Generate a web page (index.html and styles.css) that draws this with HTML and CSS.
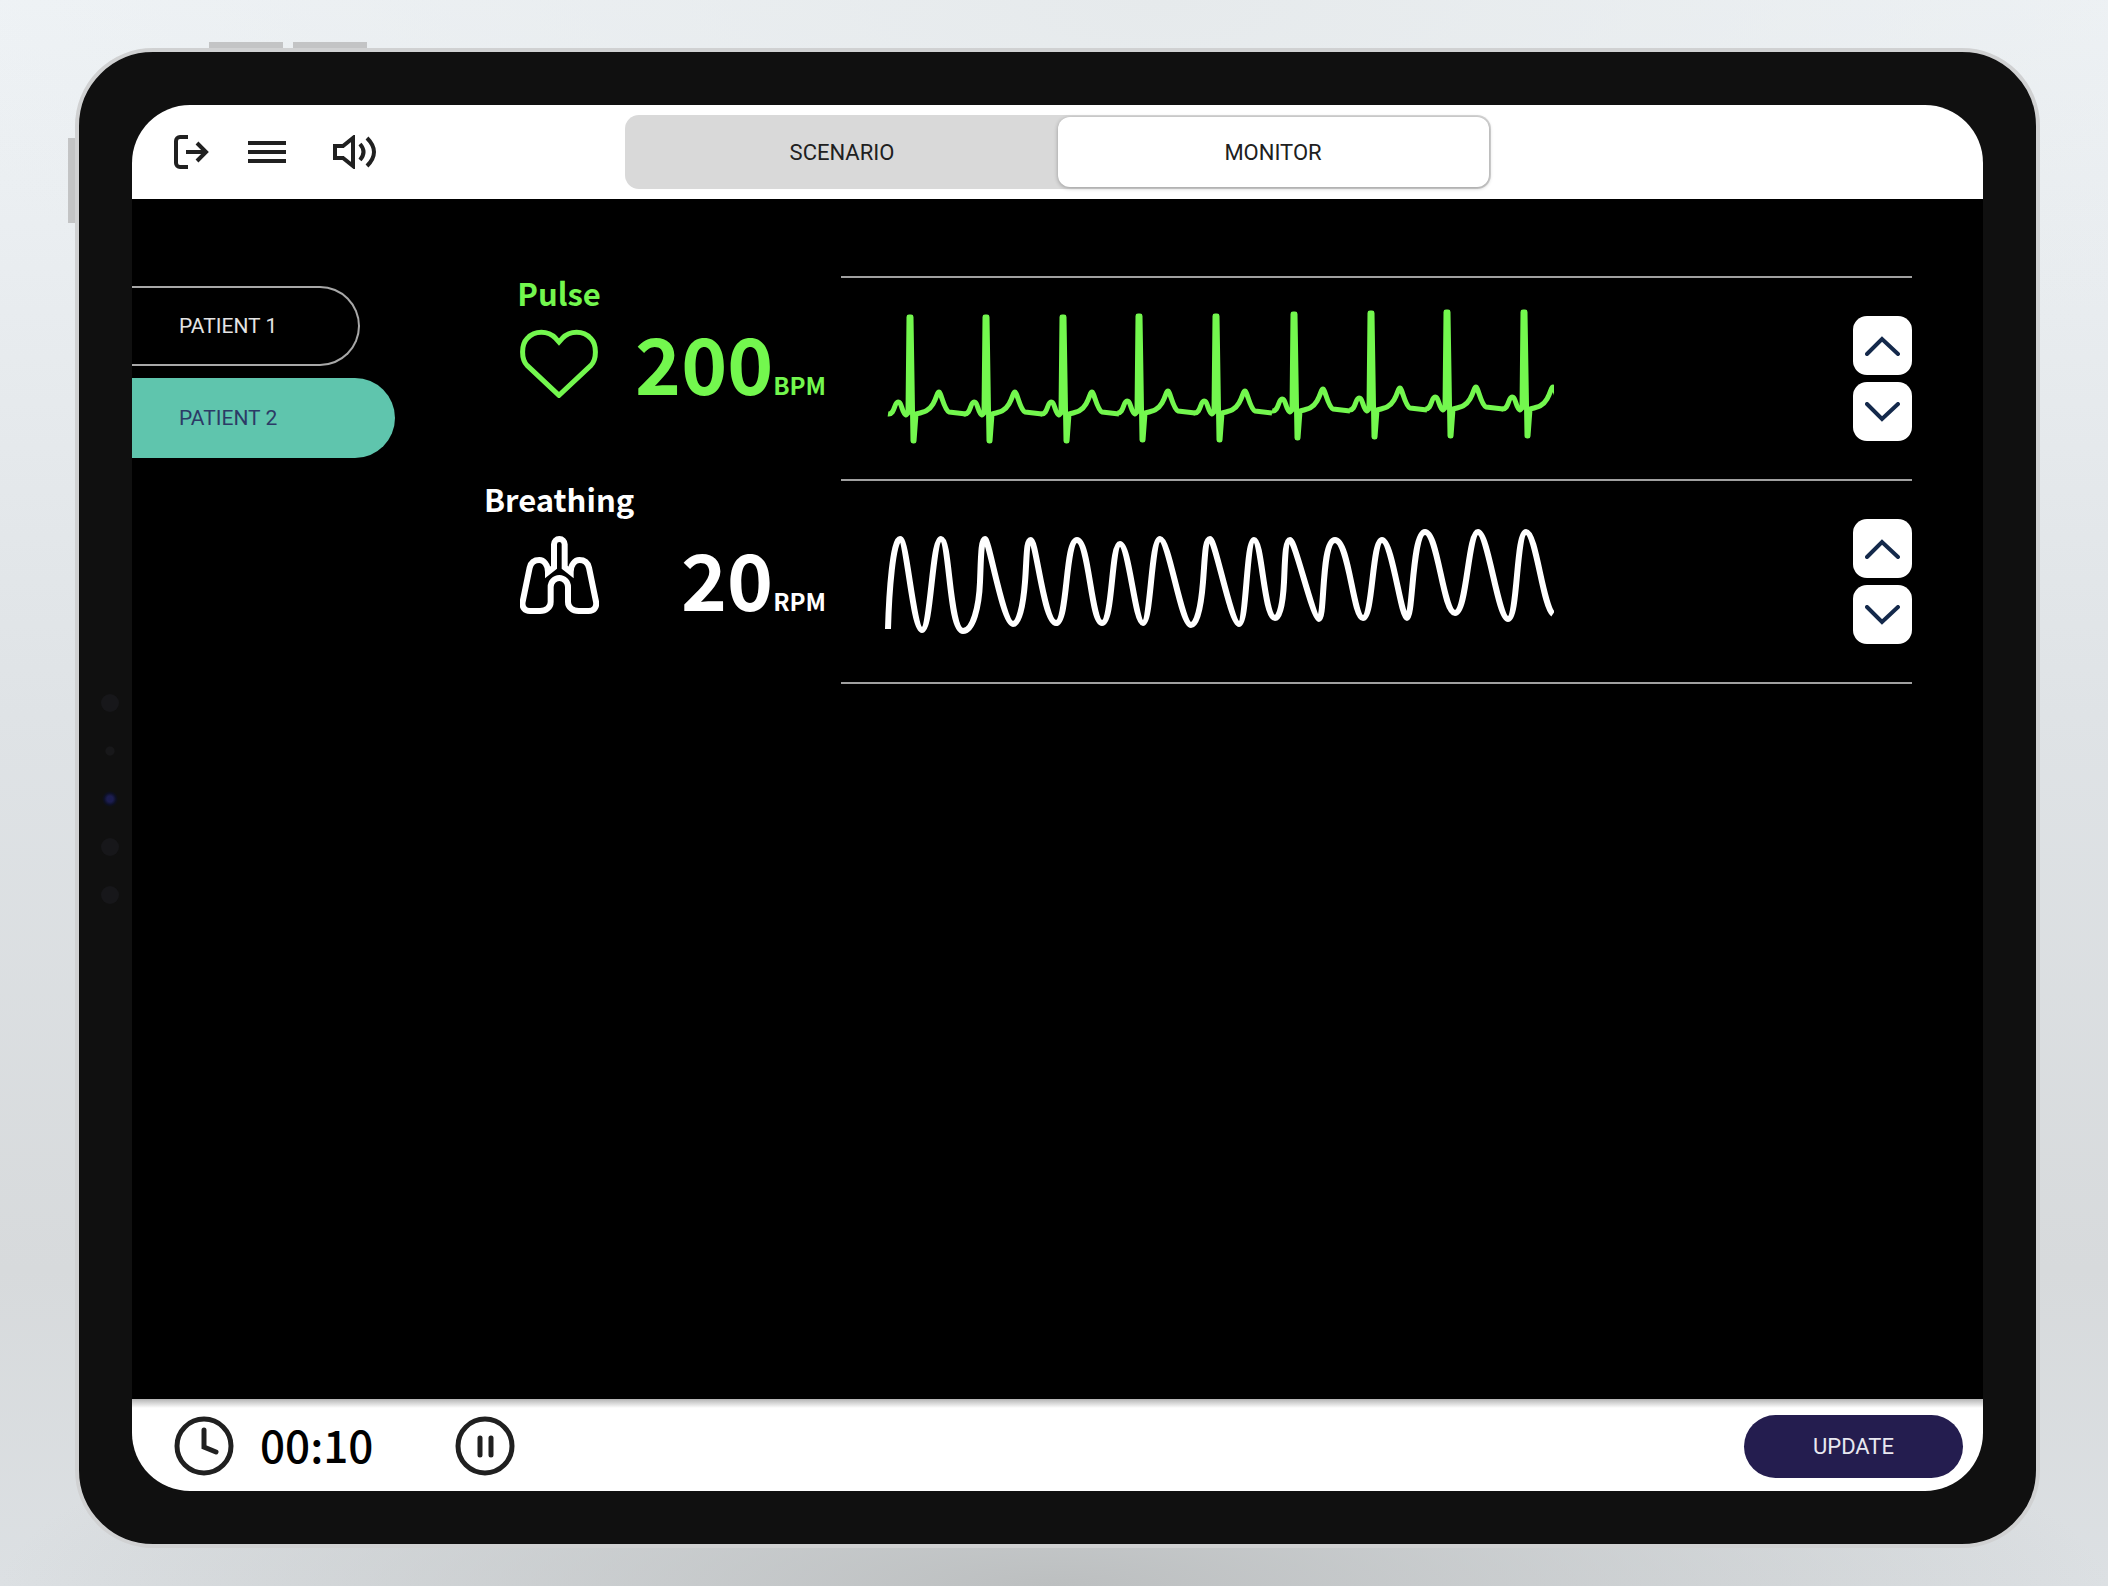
FILE: index.html
```html
<!DOCTYPE html>
<html lang="en">
<head>
  <meta charset="UTF-8" />
  <meta name="viewport" content="width=device-width, initial-scale=1.0"/>
  <title>Patient Monitor</title>
  <link rel="stylesheet" href="styles.css">
</head>
<body>

  <div class="tablet">
    <span class="side-btn side-btn-top"></span>
    <span class="side-btn side-btn-top second"></span>
    <span class="side-btn side-btn-left"></span>

    <div class="sensors">
      <span class="sensor"></span>
      <span class="sensor small"></span>
      <span class="sensor camera"></span>
      <span class="sensor"></span>
      <span class="sensor"></span>
    </div>

    <div class="screen">
      <header class="topbar">
        <div class="tools">
          <button class="icon-btn" aria-label="Log out">
            <svg width="36" height="34" viewBox="0 0 36 34"><path d="M14 2H6a4 4 0 0 0-4 4v22a4 4 0 0 0 4 4h8M12 17h20M23 8l9 9-9 9"/></svg>
          </button>
          <button class="icon-btn" aria-label="Menu">
            <svg width="38" height="34" viewBox="0 0 38 34"><path d="M0 8h38M0 17h38M0 26h38"/></svg>
          </button>
          <button class="icon-btn sound" aria-label="Sound">
            <svg width="44" height="34" viewBox="0 0 44 34"><path d="M2 11h8l10-8v28l-10-8H2zM27 9q7 8 0 16M34 3q14 14 0 28"/></svg>
          </button>
        </div>
        <nav class="tabs">
          <button class="tab">SCENARIO</button>
          <button class="tab active">MONITOR</button>
        </nav>
      </header>

      <main class="monitor">
        <div class="patients">
          <button class="patient">PATIENT 1</button>
          <button class="patient selected">PATIENT 2</button>
        </div>

        <div class="vitals">
          <section class="vital pulse">
            <div class="reading">
              <h2 class="label">Pulse</h2>
              <svg class="organ" width="78" height="74" viewBox="0 0 234 222"><path stroke-width="15" d="M117 214 22 125C3 106 3 62 22 43 44 19 84 19 107 43l10 11 10-11c23-24 63-24 85 0 19 19 19 63 0 82Z"/></svg>
              <div class="value">200<span class="unit">BPM</span></div>
            </div>
            <div class="track">
              <svg class="wave" width="673" height="200" viewBox="0 0 673 200">
                <defs>
                  <path id="beat" d="M-22 135C-15 136-16 123-12 123S-8 135-4 136L-2 134-1 38H1L3 162H4L6 135C14 133 19 132 23 125S27 113 29 113 34 131 39 133L56 135"/>
                </defs>
                <use href="#beat" x="29" y="0"/>
                <use href="#beat" x="105" y="0"/>
                <use href="#beat" x="182" y="0"/>
                <use href="#beat" x="258" y="-1"/>
                <use href="#beat" x="335" y="-1"/>
                <use href="#beat" x="413" y="-3"/>
                <use href="#beat" x="490" y="-4"/>
                <use href="#beat" x="566" y="-5"/>
                <use href="#beat" x="643" y="-5"/>
              </svg>
              <div class="stepper">
                <button class="step" aria-label="Increase pulse"><svg width="35" height="20" viewBox="0 0 35 20"><path d="M2 18 17 3 33 18"/></svg></button>
                <button class="step" aria-label="Decrease pulse"><svg width="35" height="20" viewBox="0 0 35 20"><path d="M2 2 17 17 33 2"/></svg></button>
              </div>
            </div>
          </section>

          <section class="vital breathing">
            <div class="reading">
              <h2 class="label">Breathing</h2>
              <svg class="organ" width="79" height="84" viewBox="0 0 237 252"><path stroke-width="18" d="M102 112V43a16 16 0 0 1 32 0v69l18 14C152 104 165 90 178 90s25 7 29 23l21 102c3 16-6 28-22 28h-30c-18 0-32-11-32-27v-45c0-15-12-27-26-27s-26 12-26 27v45c0 16-14 27-32 27H30C14 243 5 231 8 215L29 113C33 97 45 90 58 90s26 14 26 36Z"/></svg>
              <div class="value">20<span class="unit">RPM</span></div>
            </div>
            <div class="track">
              <svg class="wave" width="673" height="200" viewBox="0 0 673 200">
                <path d="M7 147C8 110 12 57 19 57S32 148 41 148 51 57 60 57 68 149 82 149C92 149 98 125 99 100S100 57 104 57 122 142 132 142C138 142 142 125 144 100S145 58 150 58 163 141 175 141 184 58 196 58 210 141 221 141 230 62 239 62 254 141 262 141 270 57 279 57 300 143 310 143C316 143 320 125 322 100S324 57 329 57 350 142 358 142 365 58 373 58 383 136 394 136C399 136 402 120 403 100S404 58 409 58 432 137 438 137 440 58 454 58 472 136 482 136 491 58 501 58 520 136 526 136 531 50 544 50 562 131 574 131 587 50 597 50 617 137 627 137 635 50 645 50 662 125 672 132"/>
              </svg>
              <div class="stepper">
                <button class="step" aria-label="Increase breathing"><svg width="35" height="20" viewBox="0 0 35 20"><path d="M2 18 17 3 33 18"/></svg></button>
                <button class="step" aria-label="Decrease breathing"><svg width="35" height="20" viewBox="0 0 35 20"><path d="M2 2 17 17 33 2"/></svg></button>
              </div>
            </div>
          </section>
        </div>
      </main>

      <footer class="bottombar">
        <svg class="round-icon" width="60" height="60" viewBox="0 0 60 60"><circle cx="30" cy="30" r="27"/><path d="M30 14v17l12 5"/></svg>
        <time class="clock">00:10</time>
        <button class="icon-btn pause" aria-label="Pause">
          <svg class="round-icon" width="60" height="60" viewBox="0 0 60 60"><circle cx="30" cy="30" r="27"/><path d="M25 22v17M36 22v17"/></svg>
        </button>
        <button class="update">UPDATE</button>
      </footer>
    </div>
  </div>

</body>
</html>
```
FILE: styles.css
```css
* {
  box-sizing: border-box;
}

body {
  margin: 0;
  min-height: 100vh;
  padding: 48px 68px 38px 75px;
  display: flex;
  font-family: Roboto, "Liberation Sans", sans-serif;
  font-size: 22px;
  background:
    radial-gradient(ellipse 50% 14% at 50% 100%, #bcbfc0, transparent),
    radial-gradient(ellipse 60% 30% at 55% 0, #e6eaec, transparent),
    linear-gradient(#eff3f6, #dfe3e6 45%, #d7dadc 80%, #dce0e3);
}

button {
  padding: 0;
  border: none;
  background: none;
  font: inherit;
  cursor: pointer;
}

svg {
  display: block;
  fill: none;
  stroke: currentColor;
}

/* tablet frame */
.tablet {
  position: relative;
  flex: 1;
  display: flex;
  padding: 53px;
  border: 4px solid #d0d1d2;
  border-radius: 78px;
  background: #101010;
}

.side-btn {
  position: absolute;
  background: #c3c4c5;
}

.side-btn-top {
  top: -10px;
  left: 130px;
  width: 74px;
  height: 6px;
}

.side-btn-top.second {
  left: 214px;
}

.side-btn-left {
  top: 86px;
  left: -11px;
  width: 7px;
  height: 85px;
}

.sensors {
  position: absolute;
  top: 2px;
  bottom: 0;
  left: 21px;
  width: 20px;
  display: flex;
  flex-direction: column;
  align-items: center;
  justify-content: center;
  gap: 30px;
}

.sensor {
  width: 18px;
  height: 18px;
  border-radius: 50%;
  background: #17171a;
}

.sensor.small {
  background: radial-gradient(#18181a 4px, transparent 5px);
}

.sensor.camera {
  background: radial-gradient(#1c1d50 3px, #0d1024 6px, transparent 8px);
}

.screen {
  flex: 1;
  display: flex;
  flex-direction: column;
  overflow: hidden;
  border-radius: 58px;
  background: #000;
}

/* header */
.topbar {
  height: 94px;
  display: grid;
  grid-template-columns: 1fr 866px 1fr;
  align-items: center;
  background: #fff;
}

.tools {
  display: flex;
  gap: 38px;
  padding-left: 42px;
}

.icon-btn {
  color: #202020;
  stroke-width: 4;
}

.sound {
  margin-left: 9px;
}

.tabs {
  display: flex;
  height: 74px;
  padding: 2px;
  border-radius: 14px;
  background: #d9d9d9;
}

.tab {
  flex: 1;
  border-radius: 12px;
  color: #202020;
}

.tab.active {
  background: #fff;
  box-shadow: 0 1px 4px rgba(0, 0, 0, 0.3);
}

/* monitor */
.monitor {
  flex: 1;
  display: flex;
  justify-content: space-between;
  padding: 77px 71px 77px 0;
}

.patients {
  display: flex;
  flex-direction: column;
  align-items: flex-start;
  gap: 12px;
  padding-top: 10px;
}

.patient {
  width: 228px;
  height: 80px;
  padding-left: 47px;
  border: 2px solid #a8a8a8;
  border-left: none;
  border-radius: 0 40px 40px 0;
  font-size: 21px;
  text-align: left;
  color: #e4e4e4;
}

.patient.selected {
  width: 263px;
  border-color: #5fc5ad;
  background: #5fc5ad;
  color: #2c3a66;
}

.vitals {
  flex: 1;
  margin-left: 89px;
  color: #fff;
}

.vital {
  display: flex;
  height: 203px;
}

.pulse {
  color: #73f74e;
}

.reading {
  width: 342px;
  margin-right: 15px;
  display: grid;
  grid-template-columns: 150px 1fr;
  grid-template-rows: 34px auto;
  row-gap: 14px;
  align-content: start;
  align-items: end;
  font-family: "Noto Sans CJK SC", "Noto Sans", sans-serif;
  font-weight: 700;
}

.breathing .reading {
  padding-top: 3px;
}

.label {
  grid-column: 1;
  margin: 0;
  font-size: 31px;
  line-height: 34px;
  text-align: center;
}

.organ {
  grid-row: 2;
  justify-self: center;
}

.value {
  grid-row: 2;
  grid-column: 2;
  font-size: 78px;
  line-height: 74px;
  text-align: right;
  white-space: nowrap;
}

.unit {
  font-size: 24px;
  line-height: 24px;
}

.track {
  flex: 1;
  display: flex;
  justify-content: space-between;
  align-items: center;
  padding-left: 40px;
  border-top: 2px solid #a0a0a0;
}

.breathing .track {
  box-shadow: 0 2px #a0a0a0;
}

.wave {
  stroke-width: 5;
  stroke-linejoin: round;
}

.breathing .wave {
  stroke-width: 6;
}

.stepper {
  display: flex;
  flex-direction: column;
  gap: 7px;
}

.step {
  width: 59px;
  height: 59px;
  display: flex;
  align-items: center;
  justify-content: center;
  border-radius: 14px;
  background: #fff;
  color: #14294b;
  stroke-width: 4;
  stroke-linecap: round;
}

/* footer */
.bottombar {
  height: 92px;
  display: flex;
  align-items: center;
  padding: 2px 20px 0 42px;
  background: linear-gradient(#b4b4b4, #fff 9px);
  color: #202020;
}

.round-icon {
  stroke-width: 5;
  stroke-linecap: round;
}

.clock {
  margin: 0 82px 4px 26px;
  font-family: "Noto Sans CJK SC", "Noto Sans", sans-serif;
  font-size: 44px;
  font-weight: 500;
  line-height: 60px;
  color: #000;
}

.update {
  width: 219px;
  height: 63px;
  margin-left: auto;
  border-radius: 32px;
  background: #241d4f;
  color: #e8e8f0;
}
```
